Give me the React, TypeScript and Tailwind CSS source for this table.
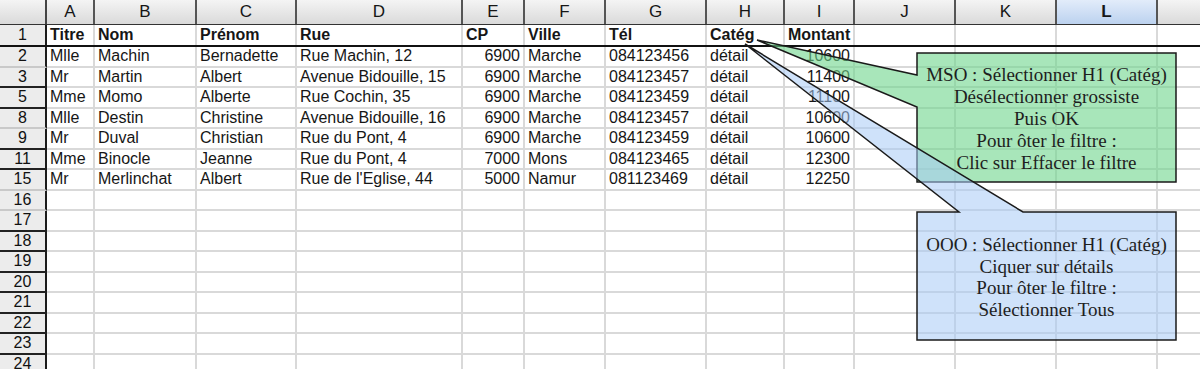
import React from 'react';

// widths of the sheet columns, A..M (M is cut by the window edge)
const cols = [
  { k: 'A', w: 'w-[48px]' },
  { k: 'B', w: 'w-[102px]' },
  { k: 'C', w: 'w-[100px]' },
  { k: 'D', w: 'w-[166px]' },
  { k: 'E', w: 'w-[62px]' },
  { k: 'F', w: 'w-[81px]' },
  { k: 'G', w: 'w-[101px]' },
  { k: 'H', w: 'w-[78px]' },
  { k: 'I', w: 'w-[70px]' },
  { k: 'J', w: 'w-[101px]' },
  { k: 'K', w: 'w-[101px]' },
  { k: 'L', w: 'w-[101px]' },
  { k: '', w: 'w-[60px]' },
];

const rightAligned = [4, 8];

const rows: { n: string; cells: string[]; dark?: boolean }[] = [
  { n: '2', cells: ['Mlle', 'Machin', 'Bernadette', 'Rue Machin, 12', '6900', 'Marche', '084123456', 'détail', '10600'] },
  { n: '3', cells: ['Mr', 'Martin', 'Albert', 'Avenue Bidouille, 15', '6900', 'Marche', '084123457', 'détail', '11400'], dark: true },
  { n: '5', cells: ['Mme', 'Momo', 'Alberte', 'Rue Cochin, 35', '6900', 'Marche', '084123459', 'détail', '11100'], dark: true },
  { n: '8', cells: ['Mlle', 'Destin', 'Christine', 'Avenue Bidouille, 16', '6900', 'Marche', '084123457', 'détail', '10600'] },
  { n: '9', cells: ['Mr', 'Duval', 'Christian', 'Rue du Pont, 4', '6900', 'Marche', '084123459', 'détail', '10600'], dark: true },
  { n: '11', cells: ['Mme', 'Binocle', 'Jeanne', 'Rue du Pont, 4', '7000', 'Mons', '084123465', 'détail', '12300'], dark: true },
  { n: '15', cells: ['Mr', 'Merlinchat', 'Albert', "Rue de l'Eglise, 44", '5000', 'Namur', '081123469', 'détail', '12250'] },
  { n: '16', cells: [] },
  { n: '17', cells: [], dark: true },
  { n: '18', cells: [], dark: true },
  { n: '19', cells: [], dark: true },
  { n: '20', cells: [], dark: true },
  { n: '21', cells: [], dark: true },
  { n: '22', cells: [], dark: true },
  { n: '23', cells: [], dark: true },
  { n: '24', cells: [], dark: true },
];

const header = ['Titre', 'Nom', 'Prénom', 'Rue', 'CP', 'Ville', 'Tél', 'Catég', 'Montant'];

function RowHead({ n, dark }: { n: string; dark?: boolean }) {
  return (
    <div
      className={
        'w-[47px] shrink-0 flex items-center justify-center bg-[#ececec] border-r-2 border-r-[#1c1c1c] border-b-2 text-[16px] text-[#111] ' +
        (dark ? 'border-b-[#222]' : 'border-b-[#c9c9c9]')
      }
    >
      {n}
    </div>
  );
}

function Cell({ i, text, bold }: { i: number; text?: string; bold?: boolean }) {
  return (
    <div
      className={
        cols[i].w +
        ' shrink-0 flex items-center px-[3px] border-r-2 border-r-[#d9d9d9] whitespace-nowrap overflow-hidden ' +
        (!bold && rightAligned.includes(i) ? 'justify-end ' : '') +
        (bold ? 'font-bold' : '')
      }
    >
      {text}
    </div>
  );
}

export default function App() {
  return (
    <div className="relative w-[1200px] h-[369px] overflow-hidden bg-white text-[#161616] font-['Liberation_Sans',Arial,sans-serif]">
      {/* column letters */}
      <div className="flex h-[25px] border-b border-b-[#333]">
        <div className="w-[47px] shrink-0 bg-linear-to-b from-[#f4f4f4] to-[#dadada] border-r-2 border-r-[#444]" />
        {cols.map((c) => (
          <div
            key={c.k || 'm'}
            className={
              c.w +
              ' shrink-0 flex items-center justify-center text-[17px] border-r-2 border-r-[#555] ' +
              (c.k === 'L'
                ? 'bg-linear-to-b from-[#e2ecfa] to-[#bcd2ef] font-bold'
                : 'bg-linear-to-b from-[#f4f4f4] to-[#dadada]')
            }
          >
            {c.k}
          </div>
        ))}
      </div>

      {/* row 1, frozen headings */}
      <div className="flex h-[22px] border-b-2 border-b-[#111] text-[16px]">
        <div className="w-[47px] shrink-0 flex items-center justify-center bg-[#ececec] border-r-2 border-r-[#1c1c1c] text-[#111]">
          1
        </div>
        {cols.map((c, i) => (
          <Cell key={c.k || 'm'} i={i} text={header[i]} bold />
        ))}
      </div>

      {rows.map((r) => (
        <div key={r.n} className="flex h-[20.5px] text-[16px]">
          <RowHead n={r.n} dark={r.dark} />
          <div className="flex border-b-2 border-b-[#d9d9d9]">
            {cols.map((c, i) => (
              <Cell key={c.k || 'm'} i={i} text={r.cells[i]} />
            ))}
          </div>
        </div>
      ))}

      {/* callouts */}
      <svg className="absolute left-0 top-0 pointer-events-none" width="1200" height="369" viewBox="0 0 1200 369">
        <polygon
          points="757,40 917,75 917,53 1176,53 1176,182 917,182 917,107"
          fill="rgb(110,214,140)"
          fillOpacity="0.6"
          stroke="#1a1a1a"
          strokeWidth="1.5"
        />
        <polygon
          points="745,44 1023,212 1176,212 1176,340 917,340 917,212 959,212"
          fill="rgb(168,203,246)"
          fillOpacity="0.55"
          stroke="#1a1a1a"
          strokeWidth="1.5"
        />
      </svg>

      <div className="absolute left-[917px] top-[53px] w-[259px] h-[129px] pt-[11px] text-center text-[19px] leading-[22px] text-[#1e1e1e] font-['Liberation_Serif','Times_New_Roman',serif]">
        <div>MSO : Sélectionner H1 (Catég)</div>
        <div>Désélectionner grossiste</div>
        <div>Puis OK</div>
        <div>Pour ôter le filtre :</div>
        <div>Clic sur Effacer le filtre</div>
      </div>

      <div className="absolute left-[917px] top-[212px] w-[259px] h-[128px] pt-[22px] text-center text-[19px] leading-[21.5px] text-[#1e1e1e] font-['Liberation_Serif','Times_New_Roman',serif]">
        <div>OOO : Sélectionner H1 (Catég)</div>
        <div>Ciquer sur détails</div>
        <div>Pour ôter le filtre :</div>
        <div>Sélectionner Tous</div>
      </div>
    </div>
  );
}
